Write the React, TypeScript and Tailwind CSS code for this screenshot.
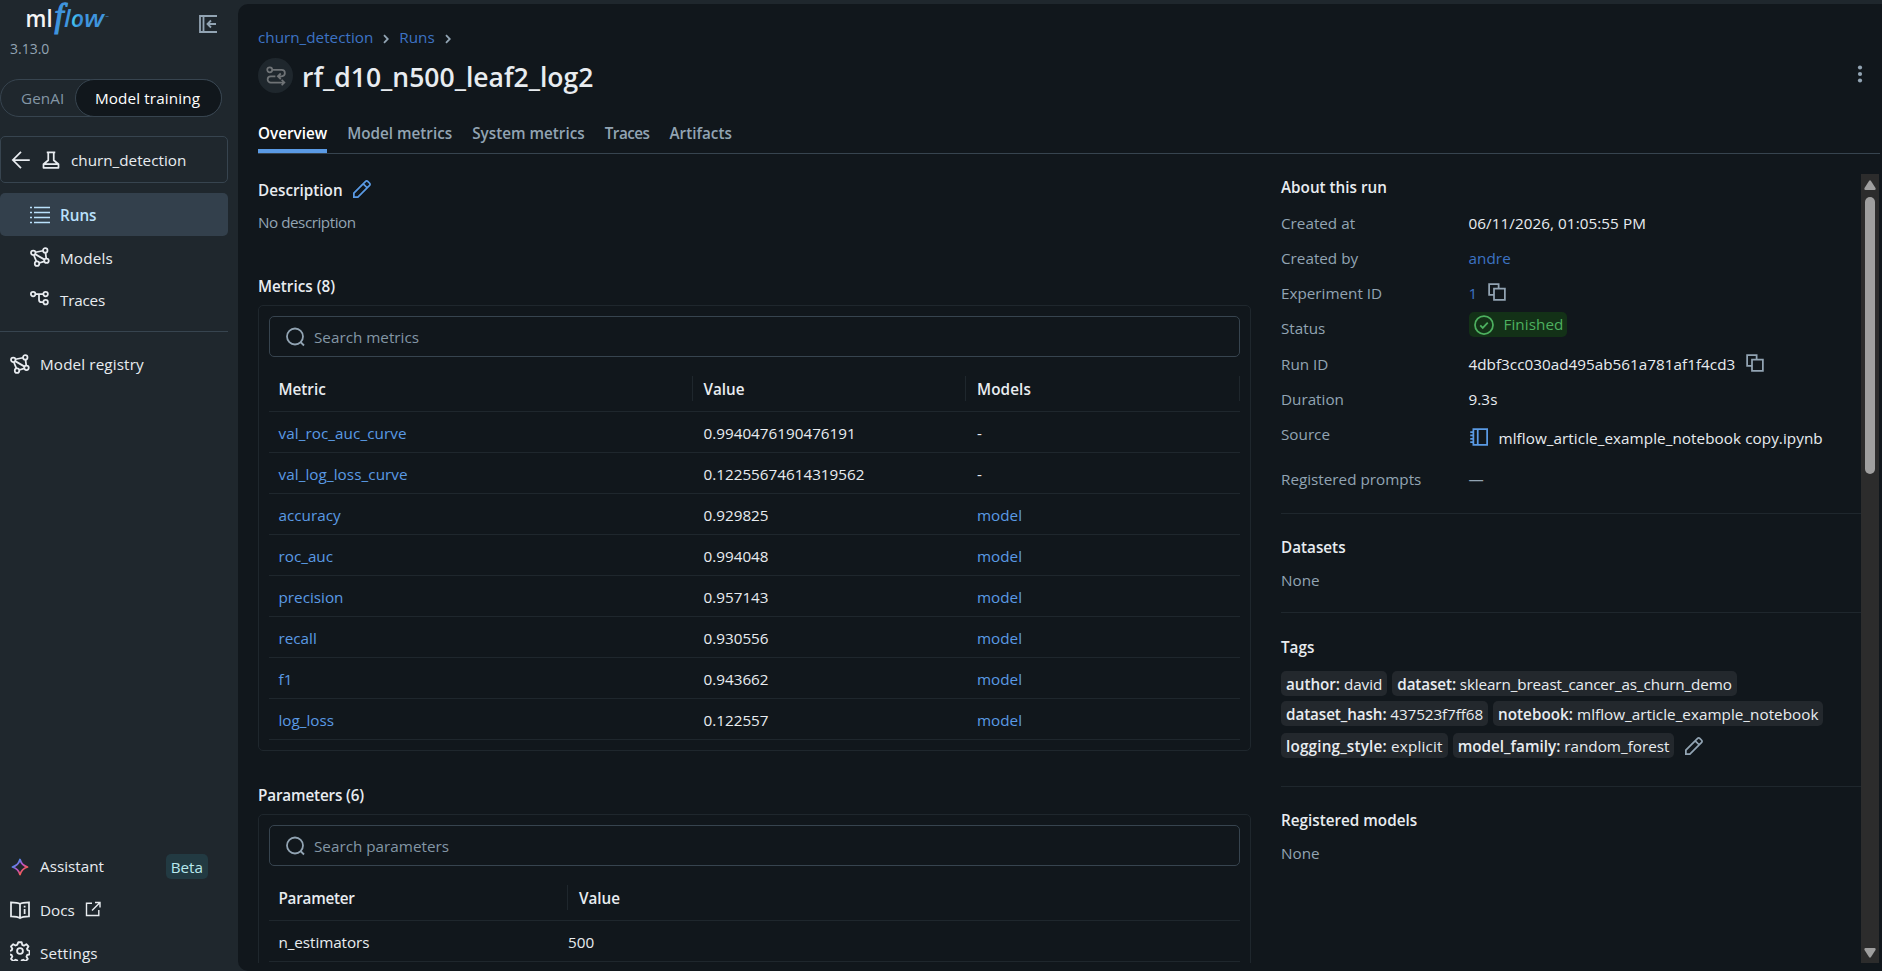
import type { ReactNode } from "react";

type Metric = { name: string; value: string; model?: string };

const metrics: Metric[] = [
    { name: "val_roc_auc_curve", value: "0.9940476190476191" },
    { name: "val_log_loss_curve", value: "0.12255674614319562" },
    { name: "accuracy", value: "0.929825", model: "model" },
    { name: "roc_auc", value: "0.994048", model: "model" },
    { name: "precision", value: "0.957143", model: "model" },
    { name: "recall", value: "0.930556", model: "model" },
    { name: "f1", value: "0.943662", model: "model" },
    { name: "log_loss", value: "0.122557", model: "model" },
];

const tagRows = [
    [
        { key: "author", value: "david", spacing: "tracking-[-0.050px]" },
        { key: "dataset", value: "sklearn_breast_cancer_as_churn_demo", spacing: "tracking-[-0.120px]" },
    ],
    [
        { key: "dataset_hash", value: "437523f7ff68", spacing: "tracking-[-0.100px]" },
        { key: "notebook", value: "mlflow_article_example_notebook", spacing: "tracking-[0.020px]" },
    ],
    [
        { key: "logging_style", value: "explicit", spacing: "tracking-[0.190px]" },
        { key: "model_family", value: "random_forest", spacing: "tracking-normal" },
    ],
];

const tabs = ["Overview", "Model metrics", "System metrics", "Traces", "Artifacts"];

// Icons share the 16-unit grid
function Icon({ size = 20, className = "", children }: { size?: number; className?: string; children: ReactNode }) {
    return (
        <svg width={size} height={size} viewBox="0 0 16 16" fill="none" stroke="currentColor" strokeWidth="1.4" className={`shrink-0 ${className}`}>
            {children}
        </svg>
    );
}

function Logo() {
    return (
        <svg width="86" height="39" viewBox="26 0 86 39" className="overflow-visible font-['Open_Sans',sans-serif]">
            <defs>
                <linearGradient id="ring" x1="0" y1="0" x2="1" y2="0.4">
                    <stop offset="0.3" stopColor="#43c9ed" />
                    <stop offset="0.8" stopColor="#3a8fdc" />
                </linearGradient>
            </defs>
            <text x="25.500" y="27.300" fontSize="24" fontWeight="600" fill="#f4f5f6" textLength="27" lengthAdjust="spacingAndGlyphs">ml</text>
            <g fill="#3f95de" fontStyle="italic">
                <text x="54.500" y="27.300" fontSize="33" fontFamily="Liberation Serif" stroke="#3f95de" strokeWidth="1.200">f</text>
                <text x="64" y="27.300" fontSize="24" fontWeight="600">l</text>
                <text x="71" y="27.300" fontSize="24" fontWeight="600" fill="url(#ring)" textLength="13" lengthAdjust="spacingAndGlyphs">o</text>
                <text x="84" y="27.300" fontSize="24" fontWeight="600" textLength="20" lengthAdjust="spacingAndGlyphs">w</text>
            </g>
            <path d="M105.500 16.500h3" stroke="#35628a" strokeWidth="1" />
        </svg>
    );
}

function ModelsIcon() {
    return (
        <Icon className="-mt-[2px]">
            <circle cx="2.6" cy="4.6" r="1.8" />
            <circle cx="12.2" cy="2.7" r="1.8" />
            <circle cx="13.2" cy="11" r="1.8" />
            <circle cx="5.6" cy="13.3" r="1.8" />
            <path d="M4.4 4.2l6-1.2M12.4 4.5l.6 4.7M11.5 11.5l-4.2 1.3M3 6.4l2.1 5.1M4.1 5.7l7.6 4.4" />
        </Icon>
    );
}

function TracesIcon() {
    return (
        <Icon className="-mt-[2px]">
            <circle cx="2.5" cy="4" r="1.8" />
            <circle cx="12.5" cy="4" r="1.8" />
            <circle cx="12.5" cy="10.5" r="1.8" />
            <path d="M4.3 4h6.4M7.2 4v4.5a2 2 0 0 0 2 2h1.5" />
        </Icon>
    );
}

function PencilIcon({ className }: { className?: string }) {
    return (
        <Icon className={className}>
            <path d="M1.500 14.500v-3.200L10.900 1.900a1.200 1.200 0 0 1 1.700 0l1.500 1.500a1.200 1.200 0 0 1 0 1.700L4.700 14.500zM9 3.900l3.100 3.100" />
        </Icon>
    );
}

function CopyIcon({ className = "" }: { className?: string }) {
    return (
        <Icon className={`text-[#92a4b3] ${className}`}>
            <path d="M5 10.2H1.7V1.7h7.6v3M5.6 5.2h8.700v9.1H5.600z" />
        </Icon>
    );
}

function SearchBox({ placeholder }: { placeholder: string }) {
    return (
        <div className="flex h-[41px] items-center gap-2 rounded-[5px] border border-[#37444f] pl-[15px] text-[#8396a5]">
            <svg width="20" height="20" viewBox="0 0 20 20" fill="none" stroke="#92a4b3" strokeWidth="1.8" className="shrink-0">
                <circle cx="10" cy="9.500" r="8" />
                <path d="M15.500 15l3.500 3.500" />
            </svg>
            <span className="pt-[2px] pl-px">{placeholder}</span>
        </div>
    );
}

function Sidebar() {
    return (
        <aside className="flex w-[238px] shrink-0 flex-col">
            <div className="flex h-[39px] items-start justify-between pl-[26px] pr-[20px]">
                <Logo />
                <svg width="20" height="20" viewBox="0 0 20 20" fill="none" stroke="#92a4b3" strokeWidth="1.8" className="mt-[14px]">
                    <path d="M19 2H2v16h17M5.5 2v16M18 10H9.5M13 6.5L9.5 10l3.5 3.5" />
                </svg>
            </div>
            <div className="h-[40px] pl-[10px] text-[14px] leading-5 text-[#92a4b3]">3.13.0</div>
            <div className="flex h-[38px] w-[222px] rounded-full border border-[#37444f]">
                <div className="flex w-[74px] items-center pl-5 tracking-[0.100px] text-[#8396a5]">GenAI</div>
                <div className="-my-px -mr-px flex flex-1 items-center justify-center rounded-full border border-[#37444f] bg-[#11171c] pr-[2px] tracking-[0.130px] text-white">Model training</div>
            </div>
            <div className="mt-[19px] flex h-[47px] w-[228px] items-center rounded-[5px] border border-[#37444f] pl-[10px]">
                <Icon>
                    <path d="M15 8H1.8M8 1.5L1.5 8 8 14.5" />
                </Icon>
                <Icon className="ml-[10px]">
                    <path d="M4.6 1.8h6.8M5.8 1.8v6.4L2 11.4v2.8h12v-2.8l-3.8-3.2V1.8M2 11.2h12" strokeLinejoin="round" />
                </Icon>
                <span className="ml-[10px] pt-px">churn_detection</span>
            </div>
            <nav className="mt-[10px] w-[228px]">
                <div className="flex h-[43px] items-center gap-[10px] rounded-[5px] bg-[#33404c] pl-[30px] font-semibold text-[#bae1fc]">
                    <svg width="20" height="20" viewBox="0 0 20 20" stroke="currentColor" strokeWidth="1.500" className="shrink-0">
                        <path d="M0 2.500h2M4 2.500h16M0 7.500h2M4 7.500h16M0 12.500h2M4 12.500h16M0 17.500h2M4 17.500h16" />
                    </svg>
                    <span className="pt-[2px]">Runs</span>
                </div>
                <div className="flex h-[43px] items-center gap-[10px] pl-[30px]"><ModelsIcon /><span className="pt-px tracking-[0.150px]">Models</span></div>
                <div className="flex h-[42px] items-center gap-[10px] pl-[30px]"><TracesIcon /><span className="tracking-[-0.200px]">Traces</span></div>
            </nav>
            <div className="mt-[10px] h-px w-[228px] bg-[#37444f]" />
            <div className="mt-[11px] flex h-[43px] items-center gap-[10px] pl-[10px]"><ModelsIcon /><span className="tracking-[0.120px]">Model registry</span></div>

            <div className="mt-auto flex h-[43px] items-center gap-[10px] pl-[10px]">
                <svg width="20" height="20" viewBox="0 0 20 20" fill="none" stroke="url(#spark)" strokeWidth="1.8" strokeLinejoin="round" className="shrink-0">
                    <defs>
                        <linearGradient id="spark" x1="0" y1="0" x2="1" y2="1">
                            <stop offset="0.2" stopColor="#4a8ff5" />
                            <stop offset="0.5" stopColor="#c04fc4" />
                            <stop offset="0.8" stopColor="#ff5f46" />
                        </linearGradient>
                    </defs>
                    <path d="M10 2.500c1.300 4.500 3 6.200 7.500 7.500-4.500 1.300-6.200 3-7.500 7.500-1.300-4.500-3-6.200-7.500-7.500C7 8.700 8.700 7 10 2.500z" />
                </svg>
                Assistant
                <span className="ml-auto mr-[30px] flex h-[25px] items-center rounded-[5px] bg-[#223a42] px-[5px] pt-px text-[#b8e9ee]">Beta</span>
            </div>
            <div className="flex h-[43px] items-center gap-[10px] pl-[10px]">
                <Icon>
                    <path d="M8 3.200C6.500 2 4 1.800.8 1.800v11.200c3.200 0 5.700.2 7.200 1.500 1.500-1.300 4-1.500 7.200-1.500V1.800C12 1.800 9.500 2 8 3.200zM8 3v11M11.700 7.200v4M11.700 4.500v1.400" />
                </Icon>
                <span className="pt-px">Docs</span>
                <Icon size={16} className="mb-[2px]">
                    <path d="M7 2.200H1.500v12.300h12.300V9M10 1.500h5v5M15 1.500L7 9.500" />
                </Icon>
            </div>
            <div className="mb-[-3px] flex h-[43px] items-center gap-[10px] pl-[10px]">
                <svg width="20" height="20" viewBox="0 0 24 24" fill="none" stroke="currentColor" strokeWidth="2.200" className="mb-[3px] shrink-0">
                    <path d="M10 1.500h4l.7 3.200 2 .9 2.900-1.700 2.500 2.600-1.700 2.900.7 1.600 2.400 1v4l-2.900.8-.8 2 1.600 2.700-2.700 2.700-2.800-1.700-1.900.8-.9 3h-3.600l-.9-3-2-.8-2.700 1.700-2.700-2.700 1.600-2.800-.8-1.900-3-.8v-4l3-.8.8-2-1.600-2.700 2.700-2.700 2.700 1.600 2-.8z" strokeLinejoin="round" />
                    <circle cx="12" cy="12" r="3.500" />
                </svg>
                <span className="pt-px tracking-[0.150px]">Settings</span>
            </div>
        </aside>
    );
}

function Header() {
    return (
        <header>
            <div className="flex h-[22px] items-center text-[#3d73c4]">
                <span>churn_detection</span>
                <Chevron />
                <span>Runs</span>
                <Chevron />
            </div>
            <div className="mt-[10px] flex h-[35px] items-center">
                <div className="flex size-[35px] items-center justify-center rounded-full bg-[#1f272d] text-[#6f7376]">
                    <Icon>
                        <circle cx="3" cy="3" r="2" />
                        <path d="M5 3h7.500a2.500 2.500 0 0 1 0 5.200h-2M11.800 6L9.500 8.200l2.300 2.200M7.500 8.200H3.800a2.500 2.500 0 0 0 0 5H14M12.500 11l2.200 2.200-2.200 2.200" />
                    </Icon>
                </div>
                <h1 className="ml-[9px] pt-[4px] text-[26.500px] font-semibold leading-[35px]">rf_d10_n500_leaf2_log2</h1>
                <svg width="20" height="20" viewBox="0 0 20 20" fill="#92a4b3" className="mb-[3px] ml-auto mr-[12px]">
                    <circle cx="10" cy="3.500" r="2.100" />
                    <circle cx="10" cy="10" r="2.100" />
                    <circle cx="10" cy="16.500" r="2.100" />
                </svg>
            </div>
            <div className="mr-[2px] mt-[20px] flex h-[41px] gap-5 border-b border-[#37444f] font-semibold text-[#92a4b3]">
                {tabs.map((tab, i) => (
                    <div key={tab} className={i === 0 ? "flex items-center border-b-4 border-[#5a9ae4] pt-[4px] text-white" : i === 3 ? "flex items-center tracking-[-0.500px]" : "flex items-center"}>
                        {tab}
                    </div>
                ))}
            </div>
        </header>
    );
}

function Chevron() {
    return (
        <svg width="6" height="10" viewBox="0 0 6 10" fill="none" stroke="#92a4b3" strokeWidth="1.800" className="mx-[10px] mt-[3px]">
            <path d="M1 1.200L4.800 5 1 8.800" />
        </svg>
    );
}

function MetricsTable() {
    return (
        <section>
            <h2 className="h-[31px] font-semibold leading-6">Metrics (8)</h2>
            <div className="h-[446px] w-[993px] rounded-[5px] border border-[#1f272d] p-[10px]">
                <SearchBox placeholder="Search metrics" />
                <div className="flex h-[55px] items-end border-b border-[#1f272d] pb-[10px] font-semibold">
                    <div className="flex h-[25px] w-[424px] items-center border-r border-[#1f272d] pl-[9.500px] pt-[2px]">Metric</div>
                    <div className="flex h-[25px] w-[273px] items-center border-r border-[#1f272d] pl-[10.500px] pt-[2px]">Value</div>
                    <div className="flex h-[25px] flex-1 items-center border-r border-[#1f272d] pl-[11px] pt-[2px] tracking-[0.100px]">Models</div>
                </div>
                {metrics.map((m) => (
                    <div key={m.name} className="flex h-[41px] items-center border-b border-[#1f272d] pt-[2px]">
                        <div className={m.model ? "w-[424px] pl-[9.500px] text-[#5a9ae4]" : "w-[424px] pl-[9.500px] tracking-[0.070px] text-[#5a9ae4]"}>{m.name}</div>
                        <div className="w-[273px] pl-[10.500px]">{m.value}</div>
                        <div className="pl-[11px]">{m.model ? <span className="text-[#5a9ae4]">{m.model}</span> : "-"}</div>
                    </div>
                ))}
            </div>
        </section>
    );
}

function ParametersTable() {
    return (
        <section className="mt-[32px]">
            <h2 className="h-[31px] font-semibold leading-6 tracking-[-0.150px]">Parameters (6)</h2>
            <div className="h-[300px] w-[993px] rounded-[5px] border border-[#1f272d] p-[10px]">
                <SearchBox placeholder="Search parameters" />
                <div className="flex h-[55px] items-end border-b border-[#1f272d] pb-[10px] font-semibold">
                    <div className="flex h-[25px] w-[299px] items-center border-r border-[#1f272d] pl-[9.500px] pt-[2px] tracking-[-0.250px]">Parameter</div>
                    <div className="flex h-[25px] flex-1 items-center pl-[11px] pt-[2px]">Value</div>
                </div>
                <div className="flex h-[41px] items-center border-b border-[#1f272d] pt-[2px]">
                    <div className="w-[299px] pl-[9.500px] tracking-[-0.080px]">n_estimators</div>
                    <div>500</div>
                </div>
            </div>
        </section>
    );
}

function Detail({ label, children }: { label: string; children: ReactNode }) {
    return (
        <div className="flex h-[35.2px] items-center">
            <div className="w-[187.500px] text-[#92a4b3]">{label}</div>
            <div className="flex items-center tracking-[0.060px]">{children}</div>
        </div>
    );
}

function AboutPanel() {
    return (
        <div className="flex-1">
            <h2 className="h-[31.600px] font-semibold leading-[26px]">About this run</h2>
            <Detail label="Created at">06/11/2026, 01:05:55 PM</Detail>
            <Detail label="Created by"><span className="text-[#3d73c4]">andre</span></Detail>
            <Detail label="Experiment ID">
                <span className="mr-[10px] text-[#3d73c4]">1</span>
                <CopyIcon className="mb-[3px]" />
            </Detail>
            <Detail label="Status">
                <span className="mb-[8px] flex h-[25px] items-center gap-[10px] rounded-[5px] bg-[#133117] pl-[5px] pr-[4px] text-[#4db05f]">
                    <Icon>
                        <circle cx="8" cy="8" r="7.200" />
                        <path d="M5 8.300l2 2 4-4.200" />
                    </Icon>
                    Finished
                </span>
            </Detail>
            <Detail label="Run ID">
                <span className="mr-[10px] tracking-[0.020px]">4dbf3cc030ad495ab561a781af1f4cd3</span>
                <CopyIcon className="mb-[2px]" />
            </Detail>
            <Detail label="Duration">9.3s</Detail>
            <Detail label="Source">
                <span className="mt-[9px] flex items-center gap-[10px]">
                    <Icon className="mb-[3px] text-[#5a9ae4]">
                        <path d="M3.500 1.700h11v12.600h-11zM7 1.700v12.600M1 4h2.500M1 6.700h2.500M1 9.400h2.500M1 12h2.500" />
                    </Icon>
                    mlflow_article_example_notebook copy.ipynb
                </span>
            </Detail>
            <div className="mt-[10px]">
                <Detail label="Registered prompts"><span className="text-[#92a4b3]">—</span></Detail>
            </div>

            <section className="mt-[16.400px] h-[99px] border-t border-[#1f272d] pt-[21px]">
                <h2 className="font-semibold leading-6">Datasets</h2>
                <p className="mt-[9px] leading-6 text-[#92a4b3]">None</p>
            </section>
            <section className="h-[174px] border-t border-[#1f272d] pt-[22px]">
                <h2 className="font-semibold leading-6">Tags</h2>
                <div className="mt-[12px] flex flex-col gap-[5px]">
                    {tagRows.map((row, i) => (
                        <div key={i} className={i === 2 ? "mt-[2px] flex h-[25px] items-center gap-[5px]" : "flex items-center gap-[5px]"}>
                            {row.map((tag) => (
                                <span key={tag.key} className={`h-[25px] rounded-[5px] bg-[#23282d] px-[5px] leading-[26px] ${tag.spacing}`}>
                                    <b className="font-semibold">{tag.key}:</b> {tag.value}
                                </span>
                            ))}
                            {i === 2 && <PencilIcon className="ml-[5px] text-[#92a4b3]" />}
                        </div>
                    ))}
                </div>
            </section>
            <section className="border-t border-[#1f272d] pt-[20.500px]">
                <h2 className="font-semibold leading-6">Registered models</h2>
                <p className="mt-[9px] leading-6 text-[#92a4b3]">None</p>
            </section>
        </div>
    );
}

function Scrollbar() {
    return (
        <div className="mr-[3px] flex w-[18px] flex-col items-center bg-[#2c2c2c] pb-[5px] pt-[6px]">
            <svg width="12" height="10" viewBox="0 0 12 10" fill="#9f9f9f"><path d="M5 1q1-1.500 2 0l4.500 7q.5 2-1 2h-9q-1.500 0-1-2z" /></svg>
            <div className="mt-[7px] h-[277px] w-[10px] rounded-full bg-[#9f9f9f]" />
            <svg width="12" height="10" viewBox="0 0 12 10" fill="#9f9f9f" className="mt-auto"><path d="M5 9q1 1.500 2 0l4.500-7q.5-2-1-2h-9q-1.500 0-1 2z" /></svg>
        </div>
    );
}

export default function App() {
    return (
        <div className="flex h-[971px] w-[1882px] overflow-hidden bg-[#1f272d] pt-1 font-['Open_Sans','Segoe_UI',sans-serif] text-[15.25px] text-[#e8ecf0]">
            <div className="-mt-1 flex">
                <Sidebar />
            </div>
            <main className="flex min-w-0 flex-1 flex-col overflow-hidden rounded-l-[10px] bg-[#11171c] pb-[8px] pl-[20px] pt-[22px]">
                <Header />
                <div className="flex min-h-0 flex-1 overflow-hidden pt-[20px]">
                    <div className="w-[1023px] shrink-0 overflow-hidden">
                        <div className="flex h-[32px] items-center gap-[9px] font-semibold">
                            <span className="pt-px">Description</span>
                            <PencilIcon className="mb-[2px] text-[#5a9ae4]" />
                        </div>
                        <p className="mb-[41px] mt-[5px] leading-[22px] tracking-[-0.480px] text-[#92a4b3]">No description</p>
                        <MetricsTable />
                        <ParametersTable />
                    </div>
                    <AboutPanel />
                    <Scrollbar />
                </div>
            </main>
        </div>
    );
}
